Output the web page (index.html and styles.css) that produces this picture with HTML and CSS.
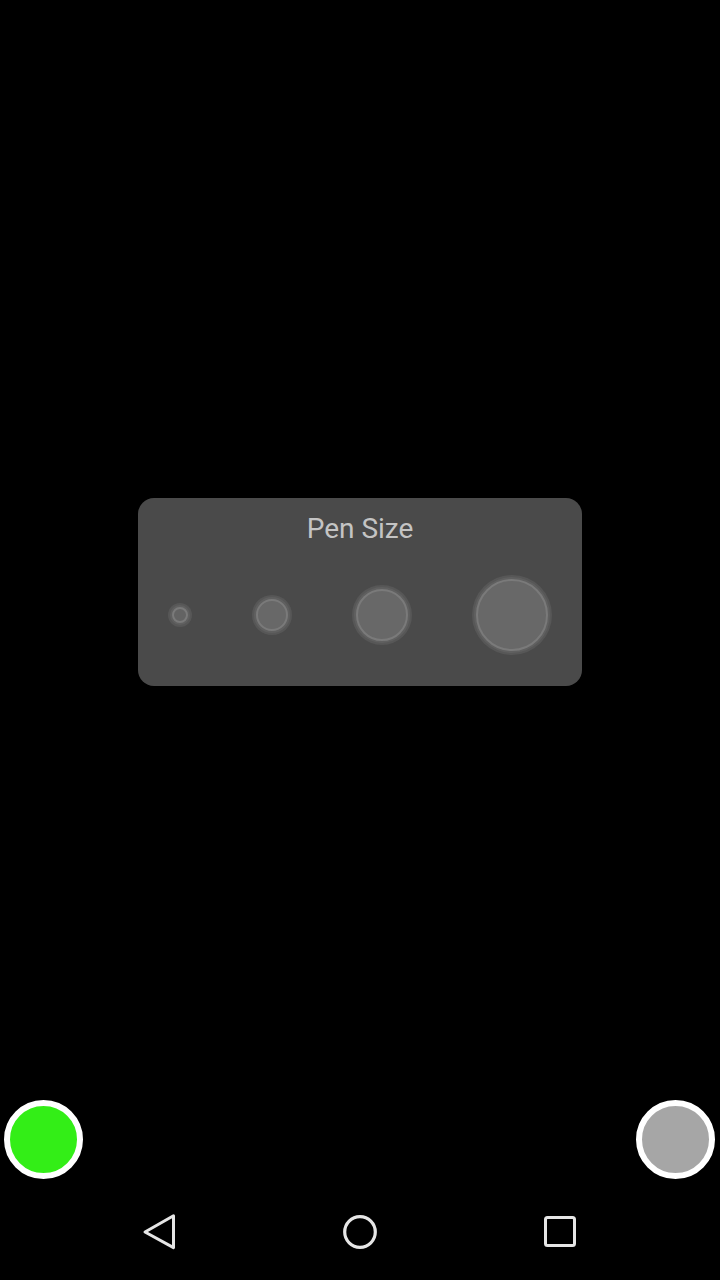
FILE: index.html
```html
<!DOCTYPE html>
<html lang="en">
<head>
<meta charset="utf-8">
<title>Pen Size</title>
<link rel="stylesheet" href="styles.css">
</head>
<body>
<div class="screen">
  <main class="canvas">
    <section class="dialog">
      <h1 class="dialog-title">Pen Size</h1>
      <div class="sizes">
        <span class="dot dot-1"></span>
        <span class="dot dot-2"></span>
        <span class="dot dot-3"></span>
        <span class="dot dot-4"></span>
      </div>
    </section>
    <button class="fab fab-left" aria-label="Colour"></button>
    <button class="fab fab-right" aria-label="Pen"></button>
  </main>
  <nav class="navbar">
    <div class="nav-slot">
      <svg class="nav-icon" viewBox="0 0 40 40" width="40" height="40">
        <path d="M33.5 3.8 L5 20 L33.5 35.6 Z" fill="none" stroke="#e6e6e6" stroke-width="3" stroke-linejoin="round"/>
      </svg>
    </div>
    <div class="nav-slot">
      <svg class="nav-icon" viewBox="0 0 40 40" width="40" height="40">
        <circle cx="20" cy="20" r="15.3" fill="none" stroke="#e6e6e6" stroke-width="3.2"/>
      </svg>
    </div>
    <div class="nav-slot">
      <svg class="nav-icon" viewBox="0 0 40 40" width="40" height="40">
        <rect x="5.5" y="5.5" width="29" height="28" rx="2" fill="none" stroke="#e6e6e6" stroke-width="3"/>
      </svg>
    </div>
  </nav>
</div>
</body>
</html>
```

FILE: styles.css
```css
html, body {
  margin: 0;
  padding: 0;
  background: #000;
}

body {
  font-family: Roboto, "Noto Sans", "Liberation Sans", sans-serif;
}

.screen {
  width: 720px;
  height: 1280px;
  display: flex;
  flex-direction: column;
  background: #000;
  overflow: hidden;
}

.canvas {
  position: relative;
  height: 1184px;
  display: flex;
  align-items: center;
  justify-content: center;
}

.dialog {
  width: 444px;
  height: 188px;
  box-sizing: border-box;
  background: #4a4a4a;
  border-radius: 16px;
  padding: 14px 0 31px;
  display: flex;
  flex-direction: column;
  align-items: center;
}

.dialog-title {
  margin: 0;
  font-size: 28px;
  font-weight: 400;
  line-height: 33px;
  height: 33px;
  color: #c4c4c4;
}

.sizes {
  margin-top: 30px;
  height: 80px;
  align-self: stretch;
  display: flex;
  align-items: center;
  gap: 68px;
  padding: 0 34px;
}

.dot {
  flex: none;
  box-sizing: border-box;
  border-radius: 50%;
  background: #686868;
  border: 2px solid #7a7a7a;
  box-shadow: 0 0 0 2px #606060, 0 0 0 4px #575757;
}

.dot-1 { width: 16px; height: 16px; background: #636363; }
.dot-2 { width: 32px; height: 32px; }
.dot-3 { width: 52px; height: 52px; }
.dot-4 { width: 72px; height: 72px; }

.fab {
  position: absolute;
  bottom: 5px;
  width: 79px;
  height: 79px;
  box-sizing: border-box;
  border-radius: 50%;
  border: 6px solid #ffffff;
  padding: 0;
}

.fab-left {
  left: 4px;
  background: #33ee17;
}

.fab-right {
  right: 5px;
  background: #a6a6a6;
}

.navbar {
  height: 96px;
  display: flex;
  align-items: center;
  padding: 0 60px;
}

.nav-slot {
  flex: 1;
  display: flex;
  justify-content: center;
  align-items: center;
}

.nav-icon {
  display: block;
}
```
